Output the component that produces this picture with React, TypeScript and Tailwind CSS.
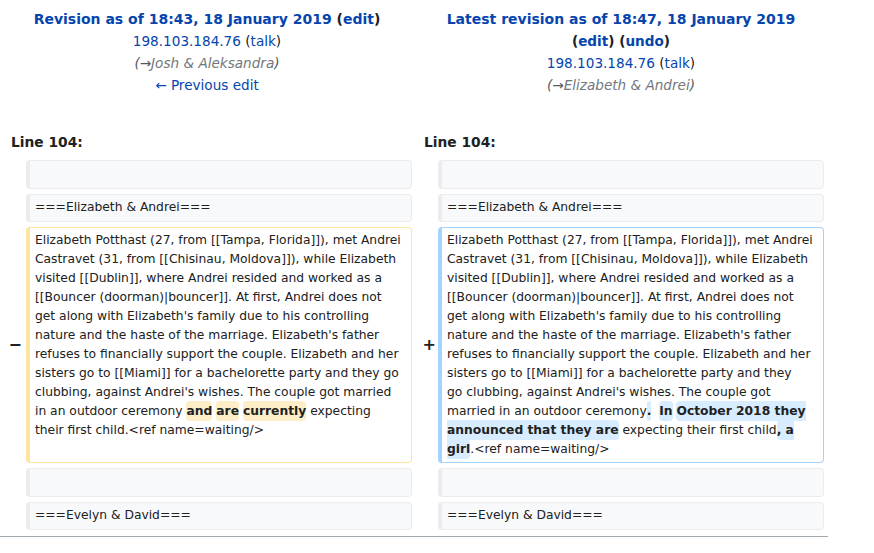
import React from "react";

const Del = ({ children }: { children: React.ReactNode }) => (
  <span className="bg-[#feeec8] font-bold rounded-[4px] py-[3px]">{children}</span>
);
const Ins = ({ children }: { children: React.ReactNode }) => (
  <span className="bg-[#d8ecff] font-bold rounded-[4px] py-[3px]">{children}</span>
);

const ctx = "rounded-[4px] border border-l-4 border-[#eaecf0] bg-[#f8f9fa] px-[5px] py-[3px] h-[28.5px] whitespace-pre";

export default function App() {
  const link = "text-[#0645ad]";
  return (
    <div className="w-[828px] font-['DejaVu_Sans',sans-serif] text-[#202122] bg-white">
      <div className="grid grid-cols-2 pt-2 text-[13.6px] leading-[22px] text-center">
        <div>
          <div className="font-bold text-[14px]">
            <span className={link}>Revision as of 18:43, 18 January 2019</span> (<span className={link}>edit</span>)
          </div>
          <div>
            <span className={link}>198.103.184.76</span> (<span className={link}>talk</span>)
          </div>
          <div className="italic text-[#54595d]">
            (→<span className="text-[#72777d]">Josh &amp; Aleksandra</span>)
          </div>
          <div className={link}>← Previous edit</div>
        </div>
        <div>
          <div className="font-bold text-[14px]">
            <span className={link}>Latest revision as of 18:47, 18 January 2019</span>
          </div>
          <div className="font-bold">
            (<span className={link}>edit</span>) (<span className={link}>undo</span>)
          </div>
          <div>
            <span className={link}>198.103.184.76</span> (<span className={link}>talk</span>)
          </div>
          <div className="italic text-[#54595d]">
            (→<span className="text-[#72777d]">Elizabeth &amp; Andrei</span>)
          </div>
        </div>
      </div>

      <div className="grid grid-cols-2 gap-x-1 px-1 mt-[35px] text-[13.8px] leading-[22px] font-bold">
        <div className="pl-[7px]">Line 104:</div>
        <div className="pl-[8px]">Line 104:</div>
      </div>

      <div className="grid grid-cols-[18px_1fr_18px_1fr] gap-x-1 gap-y-[5px] px-1 mt-[7px] text-[12.3px] leading-[19px]">
        <div />
        <div className={ctx} />
        <div />
        <div className={ctx} />

        <div />
        <div className={ctx}>{"===Elizabeth & Andrei==="}</div>
        <div />
        <div className={ctx}>{"===Elizabeth & Andrei==="}</div>

        <div className="flex items-center justify-end text-[16px] font-bold leading-none">−</div>
        <div className="rounded-[4px] border border-l-4 border-[#ffe49c] bg-white px-[5px] py-[3px] whitespace-pre">
          {"Elizabeth Potthast (27, from [[Tampa, Florida]]), met Andrei"}<br />
          {"Castravet (31, from [[Chisinau, Moldova]]), while Elizabeth"}<br />
          {"visited [[Dublin]], where Andrei resided and worked as a"}<br />
          {"[[Bouncer (doorman)|bouncer]]. At first, Andrei does not"}<br />
          {"get along with Elizabeth's family due to his controlling"}<br />
          {"nature and the haste of the marriage. Elizabeth's father"}<br />
          {"refuses to financially support the couple. Elizabeth and her"}<br />
          {"sisters go to [[Miami]] for a bachelorette party and they go"}<br />
          {"clubbing, against Andrei's wishes. The couple got married"}<br />
          {"in an outdoor ceremony "}<Del>and</Del>{" "}<Del>are</Del>{" "}<Del>currently</Del>{" expecting"}<br />
          {"their first child.<ref name=waiting/>"}
        </div>
        <div className="flex items-center justify-end text-[16px] font-bold leading-none -mr-[2px]">+</div>
        <div className="rounded-[4px] border border-l-4 border-[#a3d3ff] bg-white px-[5px] py-[3px] whitespace-pre">
          {"Elizabeth Potthast (27, from [[Tampa, Florida]]), met Andrei"}<br />
          {"Castravet (31, from [[Chisinau, Moldova]]), while Elizabeth"}<br />
          {"visited [[Dublin]], where Andrei resided and worked as a"}<br />
          {"[[Bouncer (doorman)|bouncer]]. At first, Andrei does not"}<br />
          {"get along with Elizabeth's family due to his controlling"}<br />
          {"nature and the haste of the marriage. Elizabeth's father"}<br />
          {"refuses to financially support the couple. Elizabeth and her"}<br />
          {"sisters go to [[Miami]] for a bachelorette party and they"}<br />
          {"go clubbing, against Andrei's wishes. The couple got"}<br />
          {"married in an outdoor ceremony"}<Ins>.</Ins>{"  "}<Ins>In</Ins>{" "}
          <Ins>
            {"October 2018 they"}<br />
            {"announced that they are"}
          </Ins>
          {" expecting their first child"}<Ins>
            {", a"}<br />
            {"girl"}
          </Ins>
          {".<ref name=waiting/>"}
        </div>

        <div />
        <div className={ctx} />
        <div />
        <div className={ctx} />

        <div />
        <div className={ctx}>{"===Evelyn & David==="}</div>
        <div />
        <div className={ctx}>{"===Evelyn & David==="}</div>
      </div>
      <div className="mt-[6px] h-px bg-[#a2a9b1]" />
    </div>
  );
}
